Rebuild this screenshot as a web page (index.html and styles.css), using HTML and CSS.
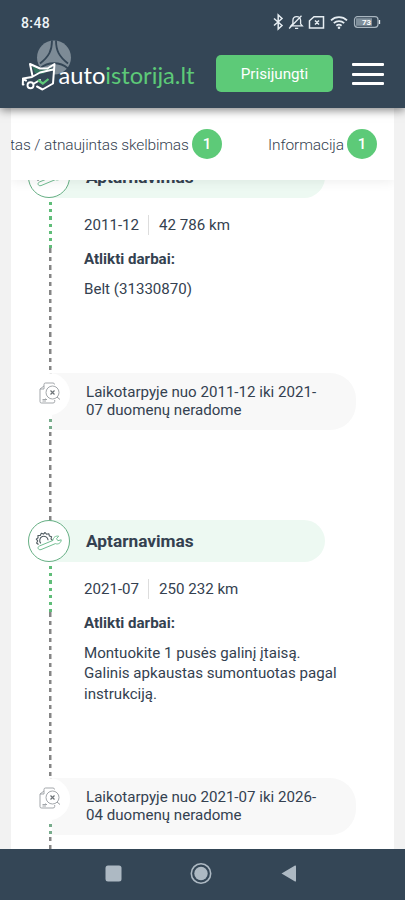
FILE: index.html
```html
<!DOCTYPE html>
<html lang="lt">
<head>
<meta charset="utf-8">
<title>autoistorija.lt</title>
<link rel="stylesheet" href="styles.css">
</head>
<body>
<svg class="defs" width="0" height="0" aria-hidden="true">
  <symbol id="service" viewBox="0 0 30 24">
    <path d="M4.500 15.500 2.600 14l1.100-2.100-1.400-1.800 1.800-1.300-.2-2.300 2.400-.1 1-2.200 2.200.9L11 3.500l1.500 1.700 2.300-.5.6 2.300 2.200.7-.6 2.200 1.600 1.600M6.800 14.300a4.200 4.200 0 1 1 7.300-3.100" fill="none" stroke="#4f5b60" stroke-width="1.100" stroke-linejoin="round"/>
    <path d="M5.400 17 19 11.400c.2-3 2.400-4.800 5.700-4.200L22.500 9.700l1.400 2 3.300-.9c.1 3-3 5-5.800 3.800L7 20.600c-3 .8-4-2.500-1.600-3.600Z" fill="#fff" stroke="#71bd91" stroke-width="1" stroke-linejoin="round"/>
  </symbol>
  <symbol id="missing" viewBox="0 0 24 24">
    <path d="M6 5V3.500Q6 2 7.500 2H15q1.500 0 1.500 1.500M6 5 2 8v12.500Q2 22 3.500 22H15q1.700 0 1.700-1.500V19M6 5v3H2M4.500 18.500H9M4.500 20H8M7.500 17.500l1 1" fill="none" stroke="#999da1" stroke-width=".9"/>
    <circle cx="14.500" cy="11.500" r="6.500" fill="#fff" stroke="#999da1" stroke-width=".9"/>
    <path d="m12.500 9.500 4 4m0-4-4 4" stroke="#6c7276" stroke-width="1.200"/>
    <path d="m19 16 3 2.500" stroke="#999da1" stroke-width="1"/>
  </symbol>
</svg>
<div class="screen">
  <header class="header">
    <div class="status">
      <span class="clock">8:48</span>
      <svg width="110" height="18" viewBox="0 0 110 18" fill="none" stroke="#e6edf2" stroke-width="1.500">
        <path d="m1 5.500 8 7-3.800 3.500V2L9 5.500l-8 7"/>
        <path d="M18 12.800h11.300l-1.700-2V7.600c0-2.400-1.500-4-3.900-4s-3.800 1.600-3.800 4v3.200zM16.100 15.500 28.500 2.800M22 15.300h3.200" stroke-width="1.300"/>
        <path d="M41 3.700h9.500V15H36.500V7.800zM42 7.500l4 4m0-4-4 4"/>
        <path d="M58 7.300c4.500-4.200 11.500-4.200 16 0M60.800 10.200c3-2.800 7.400-2.800 10.400 0M63.400 12.800c1.600-1.400 3.600-1.400 5.200 0" stroke-width="1.800"/>
        <circle cx="66" cy="14.800" r="1.300" fill="#e6edf2" stroke="none"/>
        <rect x="81.500" y="3.700" width="23.500" height="10.600" rx="3" stroke="#a8b5bf" stroke-width="1.200"/>
        <path d="M83 5.200h16v7.600H83z" fill="#7f8f9b" stroke="none"/>
        <path d="M106.500 7v4" stroke-width="1.300"/>
        <text x="93.500" y="12" text-anchor="middle" class="charge">73</text>
      </svg>
    </div>
    <div class="brandbar">
      <svg class="logo" width="180" height="56" viewBox="0 0 180 56">
        <circle cx="34" cy="17.500" r="17" fill="#7d8b96"/>
        <path d="M32 .5c0 10-3 16-12 23M36 .5c0 10 3 16 12 23M20 28.500c8-7 20-7 28 0" fill="none" stroke="#344656" stroke-width="1.800"/>
        <path d="m10 24 10 4h11l3-1v18l-12 5-8-3-4-7z" fill="#344656"/>
        <path d="m12 26 8 4 12-2-9 6-8-1z" fill="#34735f"/>
        <path d="M12.500 36 10 24l10 4.500h7.500L34.500 24 33 43.500 22.500 49.500 17 46.500M3.500 44.500H2.800L3 38.500l9-1.500 8-4.500 13-3M3 39l3 1.500M14 43.500l6-3.500" fill="none" stroke="#fff" stroke-width="2" stroke-linejoin="round" stroke-linecap="round"/>
        <circle cx="10.500" cy="45.300" r="3" fill="#344656" stroke="#fff" stroke-width="1.900"/>
        <path d="m18 40 4.800 3.500 5.700-4.500" fill="none" stroke="#5dca78" stroke-width="2.200"/>
        <text x="38.500" y="43.500" class="word" textLength="136" lengthAdjust="spacingAndGlyphs">auto<tspan class="accent">istorija.lt</tspan></text>
      </svg>
      <button class="login">Prisijungti</button>
      <div class="menu"><i></i><i></i><i></i></div>
    </div>
  </header>
  <main class="main">
    <div class="sheet">
      <nav class="tabs">
        <span class="tab">tas / atnaujintas skelbimas</span><b class="count">1</b>
        <span class="tab info">Informacija</span><b class="count">1</b>
      </nav>
      <div class="timeline">
        <section class="entry first">
          <div class="rail"><span class="node"><svg width="30" height="24"><use href="#service"/></svg></span><span class="green"></span></div>
          <div class="content">
            <h2>Aptarnavimas</h2>
            <p class="meta"><span>2011-12</span><span class="km">42 786 km</span></p>
            <h3>Atlikti darbai:</h3>
            <p class="work">Belt (31330870)</p>
          </div>
        </section>
        <section class="notice">
          <div class="rail"><span class="node"><svg width="24" height="24"><use href="#missing"/></svg></span><span class="green"></span></div>
          <p class="message">Laikotarpyje nuo 2011-12 iki 2021-<br>07 duomenų neradome</p>
        </section>
        <section class="entry">
          <div class="rail"><span class="node"><svg width="30" height="24"><use href="#service"/></svg></span><span class="green"></span></div>
          <div class="content">
            <h2>Aptarnavimas</h2>
            <p class="meta"><span>2021-07</span><span class="km">250 232 km</span></p>
            <h3>Atlikti darbai:</h3>
            <p class="work">Montuokite 1 pusės galinį įtaisą.<br>Galinis apkaustas sumontuotas pagal<br>instrukciją.</p>
          </div>
        </section>
        <section class="notice">
          <div class="rail"><span class="node"><svg width="24" height="24"><use href="#missing"/></svg></span><span class="green"></span></div>
          <p class="message">Laikotarpyje nuo 2021-07 iki 2026-<br>04 duomenų neradome</p>
        </section>
      </div>
    </div>
  </main>
  <footer class="system">
    <svg width="405" height="51" viewBox="0 0 405 51" fill="#adb9c3">
      <rect x="105.500" y="16.500" width="16" height="16" rx="2.500"/>
      <circle cx="201" cy="24.500" r="6.700"/>
      <circle cx="201" cy="24.500" r="9.700" fill="none" stroke="#adb9c3" stroke-width="1.600"/>
      <path d="M281.500 24.500 295 16.500q1-.3 1 .8v14.400q0 1.100-1 .8z"/>
    </svg>
  </footer>
</div>
</body>
</html>
```

FILE: styles.css
```css
* { box-sizing: border-box; }
body, h2, h3, p { margin: 0; }
body { font-family: Roboto, "Liberation Sans", sans-serif; font-size: 15.100px; color: #344150; }
.defs { display: none; }
.screen { display: flex; flex-direction: column; width: 405px; height: 900px; overflow: hidden; }

.header { height: 108px; flex: none; background: #344656; box-shadow: 0 2px 9px rgba(0, 0, 0, .5); z-index: 3; }
.status { display: flex; justify-content: space-between; padding: 13px 22px 0 21px; height: 38px; }
.clock { font-size: 14px; font-weight: 500; line-height: 20px; color: #eef3f6; letter-spacing: .4px; }
.charge { font: bold 8px Roboto, sans-serif; fill: #fff; stroke: none; }
.brandbar { display: flex; align-items: flex-start; padding-left: 20px; }
.logo { flex: none; margin-top: 2px; }
.word { font: 400 23px Lato, sans-serif; fill: #fff; }
.word .accent { fill: #5dca78; }
.login { width: 117px; height: 37px; margin: 17px 0 0 16px; padding: 0; border: 0; border-radius: 5px; background: #5dca78; color: #fff; font: 15.200px/36px Roboto, sans-serif; }
.menu { display: flex; flex-direction: column; gap: 6.500px; margin: 25px 0 0 19px; }
.menu i { width: 32px; height: 3px; border-radius: 1px; background: #fff; }

.main { flex: 1; min-height: 0; padding: 0 11px; background: #f2f2f2; }
.sheet { height: 100%; display: flex; flex-direction: column; background: #fff; }
.tabs { display: flex; flex: none; align-items: center; height: 72px; background: #fff; box-shadow: 0 1px 12px rgba(0, 0, 0, .08); z-index: 2; white-space: nowrap; clip-path: inset(0 0 -14px 0); }
.tab { font-size: 15.500px; font-weight: 300; line-height: 20px; letter-spacing: -.15px; color: #344150; width: 181px; padding-top: 1px; }
.tab:first-child { text-indent: -1px; }
.tab.info { width: 79px; margin-left: 46px; letter-spacing: -.1px; }
.count { width: 30px; height: 30px; border-radius: 50%; background: #5dca78; color: #fff; font-weight: 500; line-height: 31px; text-align: center; }

.timeline { flex: 1; min-height: 0; overflow: hidden; padding-left: 17px; }
.entry, .notice { display: flex; }
.entry { height: 217px; }
.entry.first { margin-top: -24px; }
.entry:not(.first) { height: 258px; }
.notice { height: 147px; }
.rail { display: flex; flex-direction: column; width: 42px; flex: none; align-items: center; background: repeating-linear-gradient(#858585 0 4.500px, transparent 4.500px 8.400px) 20.500px 0 / 2.500px 100% no-repeat; z-index: 1; }
.node { display: flex; align-items: center; justify-content: center; width: 42px; height: 42px; border-radius: 50%; border: 1.500px solid #66af84; background: #fff; flex: none; }
.green { width: 3px; height: 50px; margin-left: 2px; background: repeating-linear-gradient(#fff 0 4px, #60bd79 4px 7.200px); }
.content h2 { width: 276px; height: 42px; margin-left: -21px; padding-left: 37px; border-radius: 0 21px 21px 0; background: #edf9f2; font-size: 17.300px; font-weight: 700; line-height: 42px; }
.meta { display: flex; margin: 17px 0 0 14px; line-height: 20px; }
.km { margin-left: 9px; padding-left: 10px; border-left: 1px solid #ddd; }
h3 { margin: 14px 0 0 14px; font-size: 15.100px; font-weight: 700; line-height: 20px; }
.work { margin: 10px 0 0 14px; line-height: 20.400px; white-space: nowrap; }
.notice .node { border: 0; }
.notice .node svg { margin: -3px 0 0 2px; }
.notice .green { height: 15px; background: repeating-linear-gradient(#fff 0 4px, #78ac8c 4px 7.200px); }
.message { width: 307px; height: 57px; margin-left: -21px; padding: 11px 0 0 37px; border-radius: 0 26px 26px 0; background: #f8f8f8; line-height: 17.500px; white-space: nowrap; }

.system { height: 51px; flex: none; background: #344656; }
.system svg { display: block; }
```
